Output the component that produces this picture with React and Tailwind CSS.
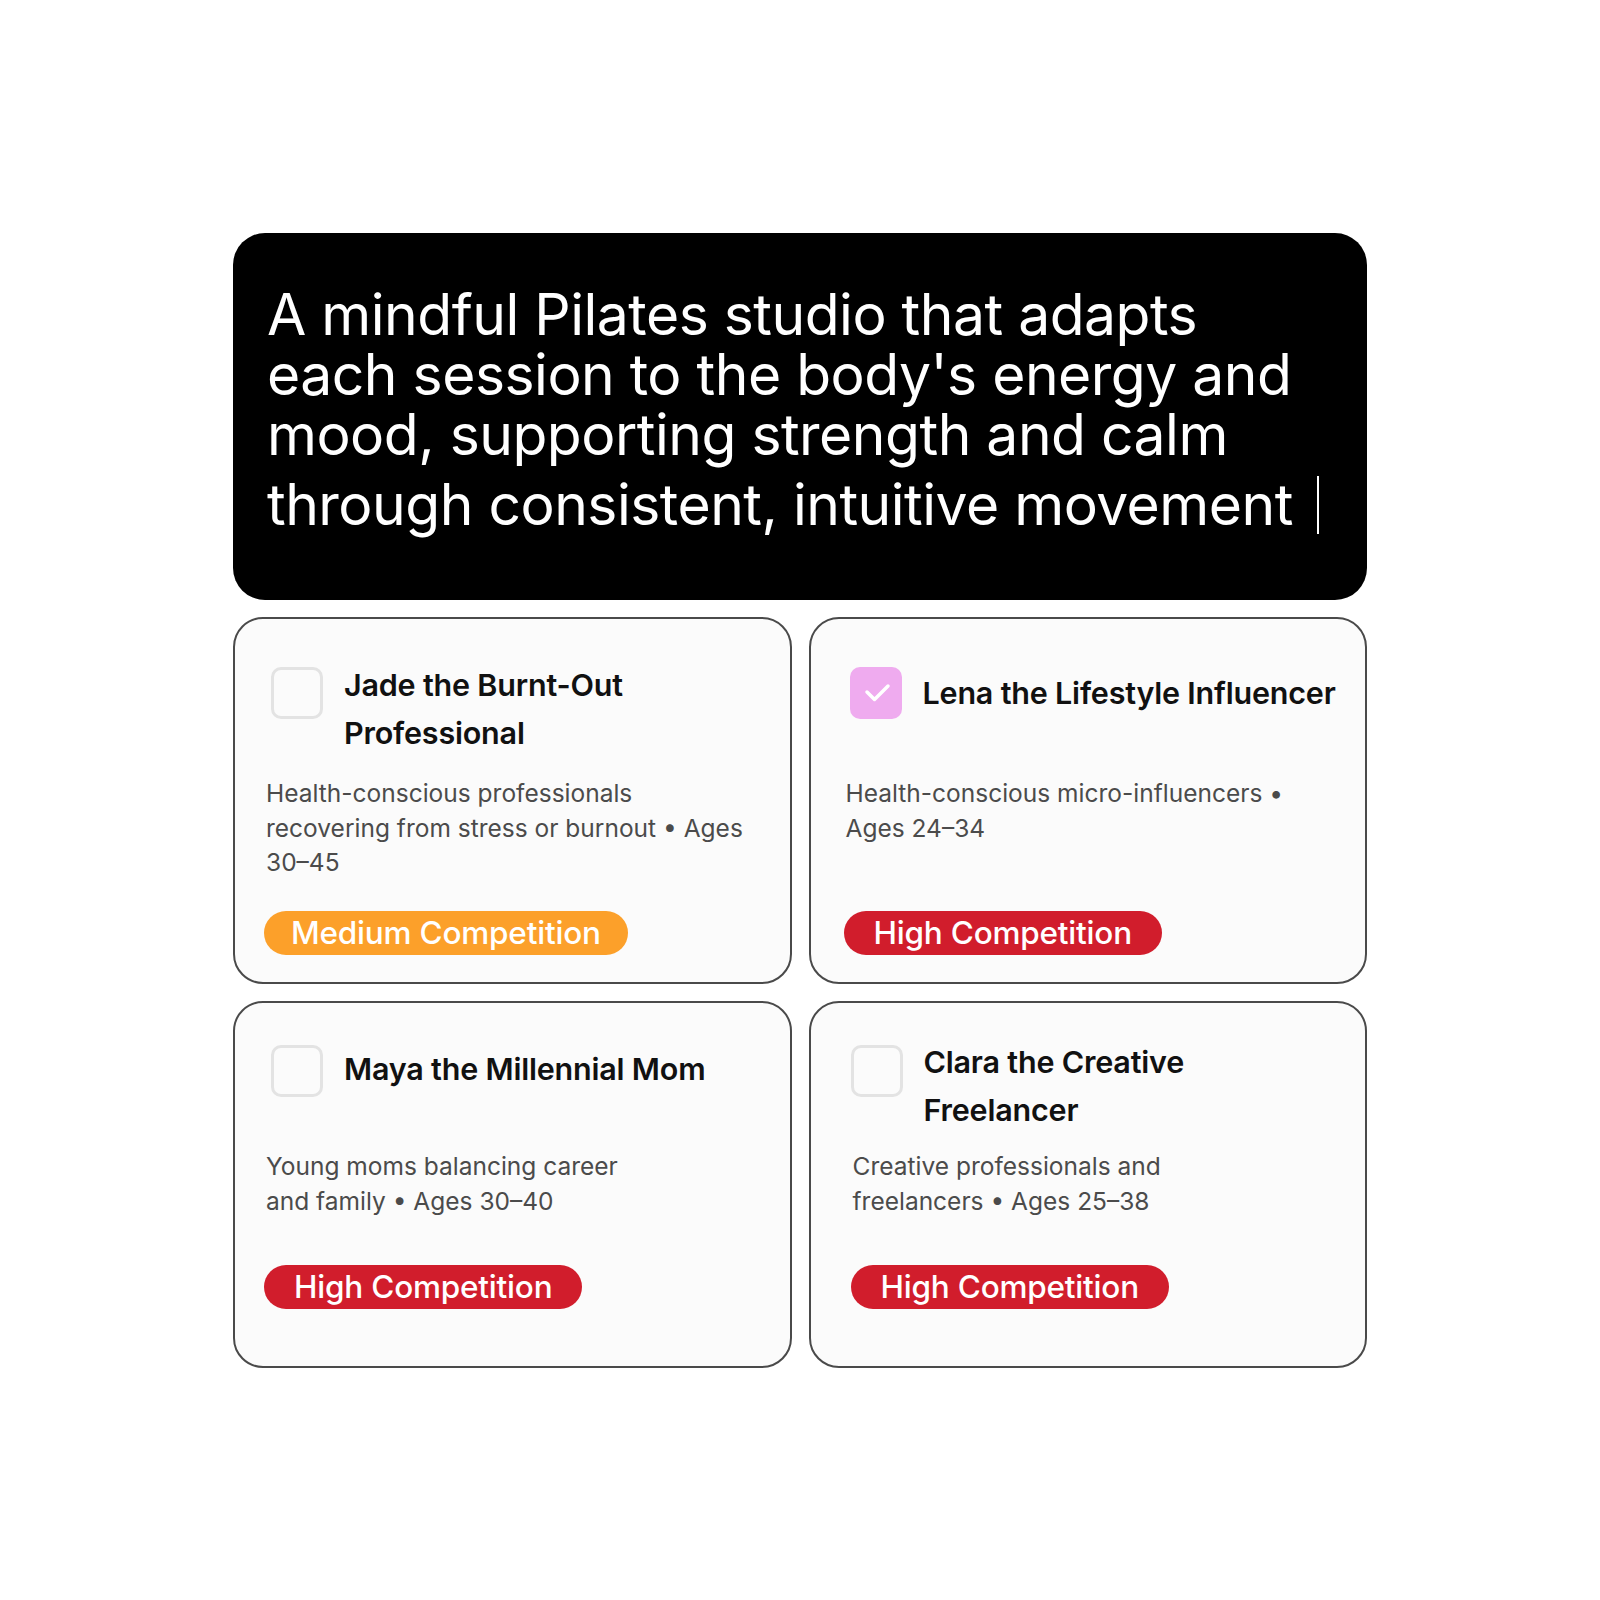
const cards = [
  {
    title: ["Jade the Burnt-Out", "Professional"],
    desc: ["Health-conscious professionals", "recovering from stress or burnout • Ages", "30–45"],
    level: "Medium",
    checked: false,
    box: "pl-[36px]",
    text: "pl-[31px]",
    titleMt: "-mt-[6px]",
    row: 1,
  },
  {
    title: ["Lena the Lifestyle Influencer"],
    desc: ["Health-conscious micro-influencers •", "Ages 24–34"],
    level: "High",
    checked: true,
    box: "pl-[39px]",
    text: "pl-[35px]",
    titleMt: "mt-[2px]",
    row: 1,
  },
  {
    title: ["Maya the Millennial Mom"],
    desc: ["Young moms balancing career", "and family • Ages 30–40"],
    level: "High",
    checked: false,
    box: "pl-[36px]",
    text: "pl-[31px]",
    titleMt: "mt-0",
    row: 2,
  },
  {
    title: ["Clara the Creative", "Freelancer"],
    desc: ["Creative professionals and", "freelancers • Ages 25–38"],
    level: "High",
    checked: false,
    box: "pl-[40px]",
    text: "pl-[42px]",
    titleMt: "-mt-[7px]",
    row: 2,
  },
];

function Checkbox({ checked }) {
  if (checked) {
    return (
      <div className="w-[52px] h-[52px] shrink-0 rounded-[10px] bg-[#efabef] flex items-center justify-center">
        <svg width="52" height="52" viewBox="0 0 52 52" fill="none">
          <path
            d="M17 25l7.5 7.5L38 19"
            stroke="white"
            strokeWidth="3.5"
            strokeLinecap="round"
            strokeLinejoin="round"
          />
        </svg>
      </div>
    );
  }
  return (
    <div className="w-[52px] h-[52px] shrink-0 rounded-[10px] border-[3px] border-[#e3e3e3] bg-[#fbfbfb]" />
  );
}

function PersonaCard({ card }) {
  const top = card.row === 1;
  return (
    <div
      className={`h-[367px] rounded-[30px] border-2 border-[#4a4a4a] bg-[#fbfbfb] flex flex-col ${
        top ? "pt-[48px]" : "pt-[42px]"
      }`}
    >
      {/* header */}
      <div className={`flex items-start gap-[21px] ${card.box} ${top ? "h-[109px]" : "h-[104px]"}`}>
        <Checkbox checked={card.checked} />
        <div
          className={`${card.titleMt} text-[30.5px] leading-[48px] font-semibold text-[#111] tracking-[-0.2px]`}
        >
          {card.title.map((l) => (
            <div key={l} className="whitespace-nowrap">
              {l}
            </div>
          ))}
        </div>
      </div>

      {/* description */}
      <div
        className={`${card.text} ${top ? "h-[135px]" : "h-[116px]"} text-[24.5px] leading-[34.5px] text-[#4b4b4b]`}
      >
        {card.desc.map((l) => (
          <div key={l} className="whitespace-nowrap">
            {l}
          </div>
        ))}
      </div>

      <div className={card.text}>
        <span
          className={`inline-flex items-center h-[44px] rounded-full text-white text-[31.5px] font-medium tracking-[-0.2px] -ml-[2px] ${
            card.level === "Medium"
              ? "bg-[#fca02a] px-[27px]"
              : "bg-[#d11d2c] px-[30px]"
          }`}
        >
          {card.level} Competition
        </span>
      </div>
    </div>
  );
}

export default function App() {
  return (
    <div
      className="min-h-screen bg-white pt-[233px]"
      style={{ fontFamily: "Inter, 'Noto Sans', sans-serif" }}
    >
      <div className="w-[1134px] mx-auto">
        <div className="bg-black rounded-[32px] pl-[34px] pr-[30px] pt-[52px] pb-[65px] text-white text-[57px] leading-[60px] tracking-[-0.5px]">
          <div className="whitespace-nowrap">A mindful Pilates studio that adapts</div>
          <div className="whitespace-nowrap">each session to the body's energy and</div>
          <div className="whitespace-nowrap">mood, supporting strength and calm</div>
          <div className="whitespace-nowrap mt-[10px] flex items-center">
            through consistent, intuitive movement
            <span className="inline-block w-[2px] h-[58px] bg-white ml-[24px]" />
          </div>
        </div>

        <div className="grid grid-cols-2 gap-[17px] mt-[17px]">
          {cards.map((c) => (
            <PersonaCard key={c.title[0]} card={c} />
          ))}
        </div>
      </div>
    </div>
  );
}
